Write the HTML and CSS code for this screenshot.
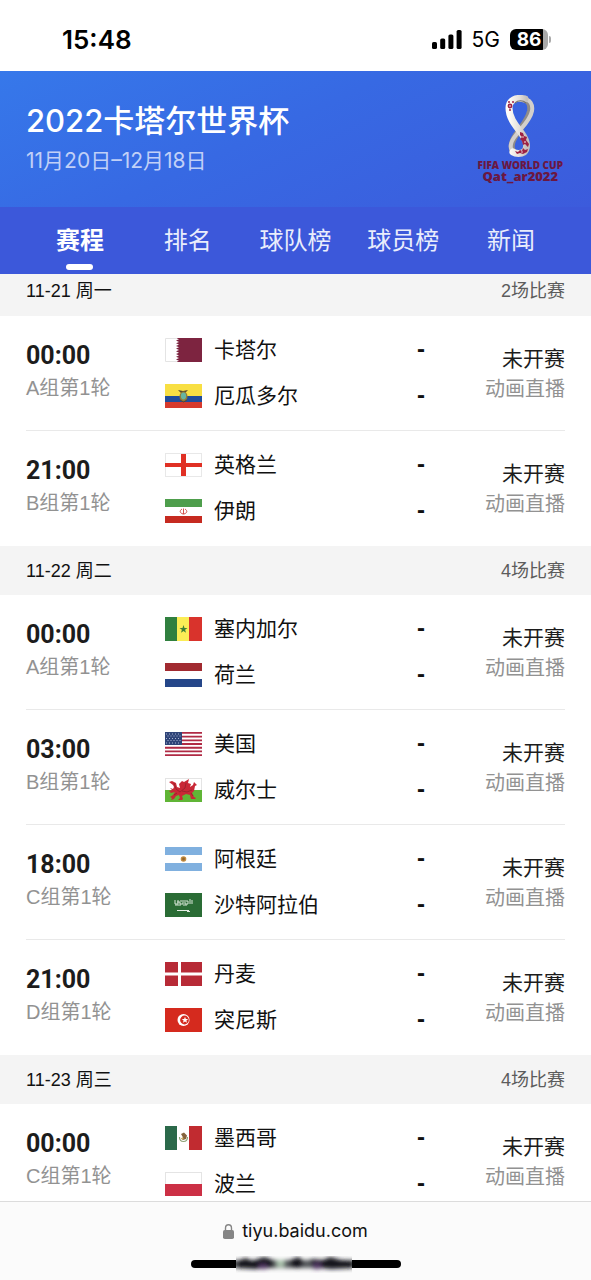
FILE: index.html
```html
<!DOCTYPE html>
<html lang="zh-CN">
<head>
<meta charset="utf-8">
<meta name="viewport" content="width=device-width, initial-scale=1">
<title>2022卡塔尔世界杯</title>
<link rel="stylesheet" href="styles.css">
</head>
<body>
<div class="app">
  <div class="status-bar">
    <span class="clock">15:48</span>
    <div class="status-icons">
      <svg class="signal" viewBox="0 0 30 19" aria-hidden="true"><rect x="0" y="12" width="5" height="7" rx="1.6"/><rect x="8.2" y="8.5" width="5" height="10.500" rx="1.6"/><rect x="16.400" y="4.500" width="5" height="14.500" rx="1.6"/><rect x="24.600" y="0" width="5" height="19" rx="1.6"/></svg>
      <span class="network">5G</span>
      <div class="battery"><span class="battery-level">86</span></div>
    </div>
  </div>

  <header class="hero">
    <div>
      <h1 class="hero-title">2022卡塔尔世界杯</h1>
      <p class="hero-date">11月20日–12月18日</p>
    </div>
    <div class="cup">
      <svg class="cup-mark" viewBox="0 0 32 62" aria-hidden="true">
        <defs>
          <linearGradient id="loop" x1="0" y1="0" x2="1" y2="0"><stop offset="0" stop-color="#fffdf8"/><stop offset=".6" stop-color="#e3dfda"/><stop offset="1" stop-color="#c4c0bd"/></linearGradient>
        </defs>
        <path fill="none" stroke="#8f8b89" stroke-width="6" d="M17 4C25 4 27 10 26 16C24 26 16 33 12 40C8 46 6 51 9 56"/>
        <path fill="none" stroke="#d3cfcb" stroke-width="4" d="M18 4C27 4 29 10 28 16C26 26 17 33 12 40C7 46 5 51 8 56"/>
        <path fill="none" stroke="url(#loop)" stroke-width="7" stroke-linecap="round" d="M21 4C12 2 5 5 5 13C5 24 13 32 18 39C23 46 24 53 20 57C17 59 12 59 9 57"/>
        <path fill="none" stroke="#77736f" stroke-width="1.200" d="M11 8C14 5 19 5 22 8"/>
        <g fill="#9d2143"><circle cx="6" cy="11" r="2.400"/><circle cx="5" cy="7" r="1"/><circle cx="9" cy="7" r="1"/><circle cx="6" cy="15" r="1"/><path d="M16 37l3 1 1 3 3 1-1 3 3 4-1 3-3-3-2 1-1-4-2-2 2-2-2-2zM19 53l2 2 3-1-1 3-4 2-3-1-3 1-2-3 3 1 2-2 2 1z"/></g>
        <g fill="#fff"><circle cx="6" cy="11" r=".8"/><circle cx="19" cy="42" r=".7"/><circle cx="21" cy="47" r=".8"/><circle cx="18" cy="57" r=".7"/></g>
      </svg>
      <span class="cup-name">FIFA WORLD CUP</span>
      <span class="cup-host">Qat_ar2022</span>
    </div>
  </header>

  <nav class="tabs">
    <a class="tab tab-active" href="#schedule" aria-current="page">赛程</a>
    <a class="tab" href="#rank">排名</a>
    <a class="tab" href="#teams">球队榜</a>
    <a class="tab" href="#players">球员榜</a>
    <a class="tab" href="#news">新闻</a>
  </nav>

  <main class="schedule" id="schedule">
    <section>
      <div class="day day-stuck"><h2 class="day-date">11-21 周一</h2><span class="day-count">2场比赛</span></div>
      <article class="match">
        <div class="when"><time class="kickoff">00:00</time><span class="round">A组第1轮</span></div>
        <div class="teams">
          <div class="team"><svg class="flag" viewBox="0 0 37 24" aria-hidden="true"><rect width="37" height="24" fill="#fff"/><path fill="#7d2440" d="M37 0H11l3 1.300-3 1.300 3 1.300-3 1.300 3 1.400-3 1.300 3 1.400-3 1.300 3 1.400-3 1.300 3 1.400-3 1.300 3 1.400-3 1.300 3 1.400-3 1.300 3 1.400-3 1.200H37z"/><path fill="none" stroke="#e4e4e4" d="M12 .5H.5v23H12"/></svg><span class="name">卡塔尔</span><span class="score">-</span></div>
          <div class="team"><svg class="flag" viewBox="0 0 37 24" aria-hidden="true"><rect width="37" height="24" fill="#f8df43"/><rect y="12" width="37" height="6" fill="#1f4d9c"/><rect y="18" width="37" height="6" fill="#d63a2d"/><path fill="#59482e" d="M13 6l5 1 5-1-3 3h-4z"/><ellipse cx="18.500" cy="12.500" rx="4" ry="5" fill="#947b35"/><ellipse cx="18.500" cy="12" rx="2.600" ry="3.400" fill="#67b4a1"/><path d="M15 16l3.500 2 3.500-2" fill="none" stroke="#59482e"/></svg><span class="name">厄瓜多尔</span><span class="score">-</span></div>
        </div>
        <div class="state"><span class="state-text">未开赛</span><a class="live" href="#live">动画直播</a></div>
      </article>
      <article class="match">
        <div class="when"><time class="kickoff">21:00</time><span class="round">B组第1轮</span></div>
        <div class="teams">
          <div class="team"><svg class="flag" viewBox="0 0 37 24" aria-hidden="true"><rect x=".5" y=".5" width="36" height="23" fill="#fff" stroke="#e8e8e8"/><path fill="#e03024" d="M16 1h5v9h16v4H21v9h-5v-9H0v-4h16z"/></svg><span class="name">英格兰</span><span class="score">-</span></div>
          <div class="team"><svg class="flag" viewBox="0 0 37 24" aria-hidden="true"><rect width="37" height="24" fill="#fff"/><rect width="37" height="8" fill="#4e9e4c"/><rect y="17" width="37" height="7" fill="#c62a20"/><path fill="none" stroke="#d4534d" d="M17 10c-3 2-2 4 1 5M20 10c3 2 2 4-1 5M18.500 9.500v6"/></svg><span class="name">伊朗</span><span class="score">-</span></div>
        </div>
        <div class="state"><span class="state-text">未开赛</span><a class="live" href="#live">动画直播</a></div>
      </article>
    </section>

    <section>
      <div class="day"><h2 class="day-date">11-22 周二</h2><span class="day-count">4场比赛</span></div>
      <article class="match">
        <div class="when"><time class="kickoff">00:00</time><span class="round">A组第1轮</span></div>
        <div class="teams">
          <div class="team"><svg class="flag" viewBox="0 0 37 24" aria-hidden="true"><rect width="37" height="24" fill="#fbed56"/><rect width="12" height="24" fill="#30803f"/><rect x="24" width="13" height="24" fill="#d9332c"/><path fill="#3f7f35" d="M18.500 8l1 2.900h3l-2.400 1.800.9 3-2.500-1.800-2.500 1.800.9-3-2.400-1.800h3z"/></svg><span class="name">塞内加尔</span><span class="score">-</span></div>
          <div class="team"><svg class="flag" viewBox="0 0 37 24" aria-hidden="true"><rect width="37" height="24" fill="#fff"/><rect width="37" height="8" fill="#a12a30"/><rect y="16" width="37" height="8" fill="#254689"/></svg><span class="name">荷兰</span><span class="score">-</span></div>
        </div>
        <div class="state"><span class="state-text">未开赛</span><a class="live" href="#live">动画直播</a></div>
      </article>
      <article class="match">
        <div class="when"><time class="kickoff">03:00</time><span class="round">B组第1轮</span></div>
        <div class="teams">
          <div class="team"><svg class="flag" viewBox="0 0 37 24" aria-hidden="true"><rect width="37" height="24" fill="#fff"/><path stroke="#b02a44" stroke-width="1.850" d="M0 .9h37M0 4.600h37M0 8.300h37M0 12h37M0 15.700h37M0 19.400h37M0 23.100h37"/><rect width="17" height="13" fill="#2f4478"/><path stroke="#aab5d2" stroke-width="1" stroke-dasharray="1 2" d="M1 2h15M2.500 4h14M1 6.500h15M2.500 8.500h14M1 11h15"/></svg><span class="name">美国</span><span class="score">-</span></div>
          <div class="team"><svg class="flag" viewBox="0 0 37 24" aria-hidden="true"><rect x=".5" y=".5" width="36" height="23" fill="#fff" stroke="#e4e4e4"/><rect y="12" width="37" height="12" fill="#60b536"/><path fill="#c92836" d="M4 4l3-1 4 2 1 4 3 1-1-4 3-3 2 1 5-3-1 4 3 1-1 3 3-2 1-3 3 3-2 1-1 5-2 2 2 4 2 1-1 1h-4l-1-4-4-1-4 2 1 3-1 1h-4l2-2-1-3-3 1-2 3-3 1 1-2-2-1 3-2 2-3-4 1-2-2 3-1-2-2 3 1 1-2-1-2z"/><path stroke="#8b202a" fill="none" stroke-width=".7" d="M9 5l2 6 4 3 5-4 1-5M17 13l5 1 5-2M12 15l-3 2M26 15l2 3"/></svg><span class="name">威尔士</span><span class="score">-</span></div>
        </div>
        <div class="state"><span class="state-text">未开赛</span><a class="live" href="#live">动画直播</a></div>
      </article>
      <article class="match">
        <div class="when"><time class="kickoff">18:00</time><span class="round">C组第1轮</span></div>
        <div class="teams">
          <div class="team"><svg class="flag" viewBox="0 0 37 24" aria-hidden="true"><rect width="37" height="24" fill="#fff"/><rect width="37" height="8" fill="#80b0df"/><rect y="16" width="37" height="8" fill="#80b0df"/><circle cx="18.500" cy="12" r="2.800" fill="#c28b40"/><circle cx="18.500" cy="12" r="1.400" fill="#94652d"/></svg><span class="name">阿根廷</span><span class="score">-</span></div>
          <div class="team"><svg class="flag" viewBox="0 0 37 24" aria-hidden="true"><rect width="37" height="24" fill="#2a6c35"/><path fill="none" stroke="#d7e6d8" d="M10 7v4h3V7M12 9h3v2h3V7M16 7v2M20 7v4h3V8h-2M25 6v5M27 7v4M10 12h6M18 12h4"/><path stroke="#e5eee5" d="M12 17.500h12M22 18.500h3"/></svg><span class="name">沙特阿拉伯</span><span class="score">-</span></div>
        </div>
        <div class="state"><span class="state-text">未开赛</span><a class="live" href="#live">动画直播</a></div>
      </article>
      <article class="match">
        <div class="when"><time class="kickoff">21:00</time><span class="round">D组第1轮</span></div>
        <div class="teams">
          <div class="team"><svg class="flag" viewBox="0 0 37 24" aria-hidden="true"><rect width="37" height="24" fill="#b72a36"/><path fill="#fff" d="M13 0h3v10.500h21v3H16V24h-3V13.500H0v-3h13z"/></svg><span class="name">丹麦</span><span class="score">-</span></div>
          <div class="team"><svg class="flag" viewBox="0 0 37 24" aria-hidden="true"><rect width="37" height="24" fill="#d52a1e"/><circle cx="18.500" cy="12" r="6" fill="#fff"/><circle cx="19.500" cy="12" r="4.400" fill="#d52a1e"/><path fill="#fff" d="M20 8.800l.9 2.200 2.300.1-1.800 1.400.6 2.300-2-1.300-2 1.300.6-2.300-1.800-1.400 2.300-.1z"/></svg><span class="name">突尼斯</span><span class="score">-</span></div>
        </div>
        <div class="state"><span class="state-text">未开赛</span><a class="live" href="#live">动画直播</a></div>
      </article>
    </section>

    <section>
      <div class="day"><h2 class="day-date">11-23 周三</h2><span class="day-count">4场比赛</span></div>
      <article class="match">
        <div class="when"><time class="kickoff">00:00</time><span class="round">C组第1轮</span></div>
        <div class="teams">
          <div class="team"><svg class="flag" viewBox="0 0 37 24" aria-hidden="true"><rect width="37" height="24" fill="#fff"/><rect width="12" height="24" fill="#2b694a"/><rect x="24" width="13" height="24" fill="#c12b30"/><path fill="none" stroke="#8da277" stroke-width="1.200" d="M14.500 11c0 6 8 6 8 0"/><path fill="#85633d" d="M16 8l3-1.500 3 3-1 3.500-3 1-2-1.500 2-1z"/><circle cx="17.500" cy="12.500" r="1" fill="#d5b45f"/></svg><span class="name">墨西哥</span><span class="score">-</span></div>
          <div class="team"><svg class="flag" viewBox="0 0 37 24" aria-hidden="true"><rect x=".5" y=".5" width="36" height="23" fill="#fff" stroke="#e4e4e4"/><rect y="12" width="37" height="12" fill="#cc3045"/></svg><span class="name">波兰</span><span class="score">-</span></div>
        </div>
        <div class="state"><span class="state-text">未开赛</span><a class="live" href="#live">动画直播</a></div>
      </article>
    </section>
  </main>

  <footer class="browser-bar">
    <button class="address" type="button">
      <svg class="lock" viewBox="0 0 11 15" aria-hidden="true"><rect y="6" width="11" height="9" rx="1.800" fill="#858585"/><path d="M2.500 7V4.200a3 3.400 0 0 1 6 0V7" fill="none" stroke="#858585" stroke-width="1.400"/></svg>
      <span>tiyu.baidu.com</span>
    </button>
    <svg class="home-bar" viewBox="0 0 210 18" aria-hidden="true">
      <defs><filter id="soft" x="-10%" y="-50%" width="120%" height="200%"><feGaussianBlur stdDeviation="2"/></filter><clipPath id="patch"><rect x="45" y="1" width="116" height="17"/></clipPath></defs>
      <rect y="5" width="210" height="8" rx="4" fill="#000"/>
      <g clip-path="url(#patch)"><rect x="45" y="1" width="116" height="17" fill="#fafafa"/><g filter="url(#soft)"><rect x="40" y="5" width="126" height="8" fill="#55585c"/><path fill="#17151f" d="M46 6l9-3 6 3 12-4 9 3v7l-17 2-19-1zM99 5l9-3 5 5-4 6-9-1zM119 4l13 1 7-3 11 3 12 1v7l-22 1-18-2z"/><path fill="#abc3ad" d="M86 5h7v7h-7z"/><path fill="#513764" d="M122 8h8v6h-8zM68 9h8v5h-8z"/></g></g>
    </svg>
  </footer>
</div>
</body>
</html>
```
FILE: styles.css
```css
* {
  box-sizing: border-box;
}

body {
  margin: 0;
  background: #fff;
  color: #111;
  font-family: "Liberation Sans", "Noto Sans CJK SC", sans-serif;
}

h1, h2, p {
  margin: 0;
  font-weight: 400;
}

a {
  color: inherit;
  text-decoration: none;
}

.app {
  display: flex;
  flex-direction: column;
  height: 100vh;
}

.status-bar {
  display: flex;
  flex: none;
  align-items: center;
  justify-content: space-between;
  padding: 20px 43px 12px 62px;
  height: 71px;
  color: #000;
  font-family: Inter, sans-serif;
}

.clock {
  font-size: 26px;
  font-weight: 600;
}

.status-icons {
  display: flex;
  align-items: center;
  gap: 10px;
}

.signal {
  width: 30px;
  height: 19px;
}

.network {
  font-size: 21px;
}

.battery {
  position: relative;
  width: 38px;
  height: 21px;
  border-radius: 6px;
  background: linear-gradient(90deg, #000 33px, #aaa 33px);
  color: #fff;
  text-align: center;
}

.battery::after {
  position: absolute;
  top: 7px;
  right: -3px;
  width: 2px;
  height: 7px;
  border-radius: 0 2px 2px 0;
  background: #aaa;
  content: "";
}

.battery-level {
  display: block;
  font-size: 19px;
  font-weight: 700;
  line-height: 21px;
}

.hero {
  display: flex;
  flex: none;
  align-items: flex-start;
  justify-content: space-between;
  padding: 24px 28px 20px 26px;
  height: 136px;
  background: linear-gradient(155deg, #3678ea 0%, #3769e3 45%, #3c5bdc 100%);
  color: #fff;
}

.hero-title {
  font-family: Inter, "Noto Sans CJK SC", sans-serif;
  font-size: 31px;
  font-weight: 500;
  line-height: 52px;
}

.hero-date {
  color: #c1d0f7;
  font-family: Inter, "Noto Sans CJK SC", sans-serif;
  font-size: 21px;
  line-height: 28px;
}

.cup {
  display: flex;
  flex-direction: column;
  align-items: center;
  color: #6b1741;
  font-family: "Open Sans", sans-serif;
  font-weight: 800;
  white-space: nowrap;
}

.cup-mark {
  width: 32px;
  height: 62px;
}

.cup-name {
  padding-top: 3px;
  font-size: 10px;
  line-height: 10px;
}

.cup-host {
  font-size: 13px;
  line-height: 13px;
}

.tabs {
  display: flex;
  flex: none;
  padding: 0 26px;
  background: #3c58da;
  color: #e9edfc;
}

.tab {
  display: flex;
  flex: 1;
  flex-direction: column;
  align-items: center;
  height: 67px;
  font-size: 24px;
  line-height: 68px;
  white-space: nowrap;
}

.tab-active {
  position: relative;
  color: #fff;
  font-weight: 700;
}

.tab-active::after {
  position: absolute;
  bottom: 4px;
  width: 27px;
  height: 6px;
  border-radius: 3px;
  background: #fff;
  content: "";
}

.schedule {
  flex: 1;
  min-height: 0;
  overflow-y: auto;
  scrollbar-width: none;
}

.day {
  display: flex;
  align-items: center;
  justify-content: space-between;
  padding: 0 26px 4px;
  height: 49px;
  background: #f4f4f4;
  font-size: 18px;
}

.day-stuck {
  padding-bottom: 12px;
  height: 42px;
}

.day-date {
  font-size: 18px;
}

.day-count {
  color: #5c5c5c;
}

.match {
  display: grid;
  grid-template-columns: 139px 1fr 140px;
  align-items: center;
  margin: 0 26px;
  height: 115px;
  border-bottom: 1px solid #e9e9e9;
}

.match:last-child {
  border-bottom-color: transparent;
}

.when,
.state {
  display: flex;
  flex-direction: column;
}

.when {
  padding-bottom: 5px;
}

.kickoff {
  color: #1c1c1c;
  font-family: Roboto, sans-serif;
  font-size: 25px;
  font-weight: 700;
  line-height: 34px;
}

.round,
.live {
  color: #929292;
  font-size: 20px;
  line-height: 30px;
}

.teams {
  display: flex;
  flex-direction: column;
  gap: 16px;
}

.team {
  display: flex;
  align-items: center;
  gap: 12px;
  height: 30px;
}

.flag {
  flex: none;
  width: 37px;
  height: 24px;
}

.name {
  flex: 1;
  color: #111;
  font-size: 21px;
  line-height: 30px;
  white-space: nowrap;
}

.score {
  padding-bottom: 2px;
  font-size: 24px;
  font-weight: 700;
  line-height: 24px;
}

.state {
  align-items: flex-end;
  padding-top: 2px;
}

.state-text {
  color: #1c1c1c;
  font-size: 21px;
  line-height: 30px;
}

.browser-bar {
  display: flex;
  flex: none;
  flex-direction: column;
  align-items: center;
  gap: 9px;
  padding: 14px 26px 7px;
  border-top: 1px solid #dcdcdc;
  background: #fbfbfb;
}

.address {
  display: flex;
  align-items: center;
  gap: 8px;
  padding: 0;
  border: 0;
  background: none;
  color: #111;
  font-family: Inter, sans-serif;
  font-size: 18px;
  line-height: 30px;
}

.lock {
  width: 11px;
  height: 15px;
}

.home-bar {
  width: 210px;
  height: 18px;
}
```
